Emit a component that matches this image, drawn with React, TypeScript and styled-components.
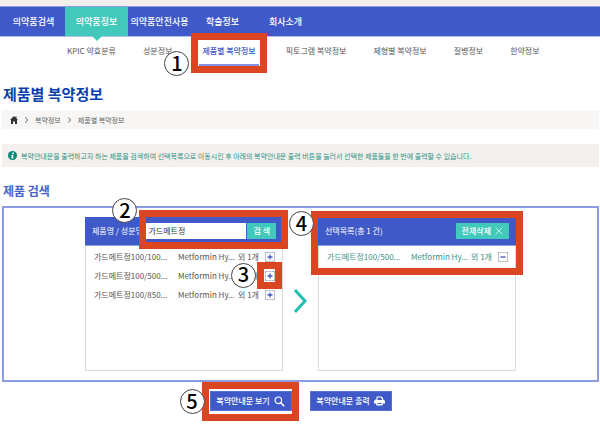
import React from "react";
import styled, { createGlobalStyle, css } from "styled-components";

const blue = "#4059c8";
const teal = "#42c9bb";
const orange = "#dc4522";

const GlobalStyle = createGlobalStyle`
  * { box-sizing: border-box; }
  body {
    margin: 0;
    background: #fff;
    color: #555;
    font-family: "Noto Sans CJK KR", "Noto Sans", sans-serif;
    font-size: 8px;
    line-height: 12px;
  }
  button, input { font: inherit; }
  a { color: inherit; text-decoration: none; }
`;

const Page = styled.div`
  min-height: 100vh;
  padding-bottom: 12px;
  border-top: 6px solid #f3efec;
`;

const MainNav = styled.nav`
  display: flex;
  height: 31px;
  background: ${blue};
  border-top: 1px solid #8e9ce0;
  border-bottom: 1px solid #b5bfec;
  font-size: 9px;
  font-weight: 500;
  white-space: nowrap;
`;

const MainLink = styled.a<{ $active?: boolean; $space?: number }>`
  position: relative;
  display: flex;
  align-items: center;
  justify-content: center;
  min-width: 63px;
  margin-left: ${(p) => p.$space ?? 0}px;
  color: #fff;
  ${(p) =>
    p.$active &&
    css`
      background: ${teal};
      &::after {
        content: "";
        position: absolute;
        top: 100%;
        left: 50%;
        margin-left: -5px;
        border: 5px solid transparent;
        border-top-color: ${teal};
        border-bottom-width: 0;
      }
    `}
`;

const SubNav = styled.nav`
  display: flex;
  gap: 27px;
  padding: 8px 0 0 67px;
  height: 46px;
  white-space: nowrap;
`;

const SubLink = styled.a<{ $active?: boolean }>`
  position: relative;
  display: flex;
  justify-content: center;
  height: 21px;
  padding: 0 ${(p) => (p.$active ? 3 : 0)}px;
  color: ${(p) => (p.$active ? blue : "#555")};
  font-weight: ${(p) => (p.$active ? 500 : 400)};
  border-bottom: 2px solid ${(p) => (p.$active ? "#8391df" : "transparent")};
`;

const Content = styled.main`
  padding: 0 1px 0 2px;
`;

const Title = styled.h1`
  margin: 0 0 5px;
  padding-left: 1px;
  font-size: 15px;
  line-height: 22px;
  font-weight: 700;
  color: #0b3fae;
`;

const Breadcrumb = styled.nav`
  display: flex;
  align-items: center;
  gap: 6px;
  height: 19px;
  padding-left: 8px;
  background: #f7f6f5;
  font-size: 7px;
  color: #666;
  svg { display: block; }
`;

const Notice = styled.p`
  display: flex;
  align-items: center;
  gap: 4px;
  height: 23px;
  margin: 15px 0 13px;
  padding-left: 6px;
  background: #f4f0ed;
  font-size: 7px;
  color: #2c9485;
  white-space: nowrap;
`;

const Heading = styled.h2`
  margin: 0 0 4px;
  padding-left: 1px;
  font-size: 12px;
  line-height: 22px;
  font-weight: 700;
  color: #4a62c8;
`;

const SearchArea = styled.section`
  display: flex;
  justify-content: center;
  align-items: center;
  padding: 9px 0;
  border: 2px solid #8d9be1;
`;

const Panel = styled.section`
  position: relative;
  width: 198px;
  height: 154px;
  border: 1px solid #dcdcdc;
  border-top: 0;
`;

const PanelHeader = styled.header`
  position: relative;
  display: flex;
  align-items: center;
  justify-content: space-between;
  height: 29px;
  margin: 0 -1px;
  padding: 0 7px;
  background: ${blue};
  border-bottom: 1px solid #8d9be1;
  color: #fff;
  white-space: nowrap;
`;

const SearchGroup = styled.form`
  position: relative;
  display: flex;
  gap: 1px;
  height: 16px;
`;

const SearchInput = styled.input`
  width: 100px;
  padding: 0 2px;
  border: 0;
  background: #fff;
  color: #333;
`;

const TealButton = styled.button`
  display: flex;
  align-items: center;
  justify-content: center;
  gap: 4px;
  height: 16px;
  padding: 0 6px;
  border: 0;
  background: ${teal};
  color: #fff;
  font-weight: 500;
`;

const List = styled.ul<{ $selected?: boolean }>`
  margin: 0;
  padding: 1px 7px 0 8px;
  list-style: none;
  color: ${(p) => (p.$selected ? "#3c9186" : "#555")};
`;

const Row = styled.li`
  display: grid;
  grid-template-columns: 84px 60px 1fr 10px;
  align-items: center;
  height: 19px;
  white-space: nowrap;
`;

const IconButton = styled.button`
  position: relative;
  display: block;
  width: 10px;
  height: 10px;
  padding: 0;
  border: 1px dashed #b9b9c4;
  background: #fff;
  color: ${blue};
  svg { display: block; }
`;

const ArrowIcon = styled.svg`
  width: 35px;
  height: 24px;
  margin-top: 14px;
`;

const Actions = styled.div`
  display: flex;
  justify-content: center;
  gap: 18px;
  margin-top: 9px;
`;

const ActionButton = styled.button`
  position: relative;
  display: flex;
  align-items: center;
  justify-content: center;
  gap: 4px;
  width: 82px;
  height: 20px;
  padding: 0;
  border: 1px solid #5a70d2;
  background: ${blue};
  color: #fff;
  font-weight: 500;
  white-space: nowrap;
`;

const Highlight = styled.span<{ $inset: string }>`
  position: absolute;
  z-index: 1;
  inset: ${(p) => p.$inset};
  border: 7px solid ${orange};
  pointer-events: none;
`;

const Step = styled.span<{ $left: number; $top: number }>`
  position: absolute;
  z-index: 2;
  left: ${(p) => p.$left}px;
  top: ${(p) => p.$top}px;
  display: flex;
  align-items: center;
  justify-content: center;
  width: 25px;
  height: 25px;
  padding-bottom: 2px;
  border: 1px solid #444;
  border-radius: 50%;
  background: #fff;
  color: #000;
  font-size: 20px;
  line-height: 20px;
  font-weight: 500;
`;

const HomeIcon = () => (
  <svg width="8" height="8" viewBox="0 0 16 16" fill="#333" aria-hidden="true">
    <path d="M8 0 0 8h2v8h4v-5h4v5h4V8h2L13 5V1h-2v2z" />
  </svg>
);

const Chevron = () => (
  <svg width="5" height="6" viewBox="0 0 5 6" fill="none" stroke="#777" aria-hidden="true">
    <path d="M1 .5 4 3 1 5.5" />
  </svg>
);

const InfoIcon = () => (
  <svg width="9" height="9" viewBox="0 0 18 18" aria-hidden="true">
    <circle cx="9" cy="9" r="9" fill="#08897b" />
    <path d="M9 3h3l-.6 3h-3zM7 7.500h4L9.800 13h1.500l-.4 2H6.500l1.200-5.500H6.500z" fill="#fff" />
  </svg>
);

const PlusMinus = ({ minus }: { minus?: boolean }) => (
  <svg width="8" height="8" viewBox="0 0 8 8" fill="none" stroke="currentColor" aria-hidden="true">
    <path d={minus ? "M1.500 4h5" : "M1.500 4h5M4 1.500v5"} strokeWidth="1.300" />
  </svg>
);

const CloseIcon = () => (
  <svg width="8" height="8" viewBox="0 0 8 8" fill="none" stroke="#fff" strokeWidth=".7" aria-hidden="true">
    <path d="m.5.5 7 7m0-7-7 7" />
  </svg>
);

const SearchIcon = () => (
  <svg width="11" height="11" viewBox="0 0 11 11" fill="none" stroke="#fff" aria-hidden="true">
    <circle cx="4.300" cy="4.300" r="3.300" strokeWidth="1.200" />
    <path d="m6.700 6.700 3.500 3.500" strokeWidth="1.500" />
  </svg>
);

const PrinterIcon = () => (
  <svg width="11" height="10" viewBox="0 0 22 20" aria-hidden="true">
    <path d="M5 1h10l3 3v3h1l3 3v5h-4l-1 4H5l-1-4H0v-5l3-3h2z" fill="#fff" />
    <path d="M7 3h7v2h2v3H7zM7 14h8v2H7z" fill={blue} />
  </svg>
);

const products = ["가드메트정100/100...", "가드메트정100/500...", "가드메트정100/850..."];

export default function App() {
  return (
    <>
      <GlobalStyle />
      <Page>
        <MainNav>
          <MainLink href="#search" $space={2}>의약품검색</MainLink>
          <MainLink href="#info" $active>의약품정보</MainLink>
          <MainLink href="#safety">의약품안전사용</MainLink>
          <MainLink href="#research">학술정보</MainLink>
          <MainLink href="#company">회사소개</MainLink>
        </MainNav>
        <SubNav>
          <SubLink href="#kpic">KPIC 약효분류</SubLink>
          <SubLink href="#ingredient">성분정보</SubLink>
          <SubLink href="#product" $active>
            제품별 복약정보
            <Highlight $inset="-12px -8px -9px -8px" />
            <Step $left={-35} $top={6}>1</Step>
          </SubLink>
          <SubLink href="#pictogram">픽토그램 복약정보</SubLink>
          <SubLink href="#form">제형별 복약정보</SubLink>
          <SubLink href="#disease">질병정보</SubLink>
          <SubLink href="#herbal">한약정보</SubLink>
        </SubNav>
        <Content>
          <Title>제품별 복약정보</Title>
          <Breadcrumb>
            <HomeIcon />
            <Chevron />
            <a href="#guide">복약정보</a>
            <Chevron />
            <a href="#product">제품별 복약정보</a>
          </Breadcrumb>
          <Notice>
            <InfoIcon />
            복약안내문을 출력하고자 하는 제품을 검색하여 선택목록으로 이동시킨 후 아래의 복약안내문 출력 버튼을 눌러서 선택한 제품들을 한 번에 출력할 수 있습니다.
          </Notice>
          <Heading>제품 검색</Heading>
          <SearchArea>
            <Panel>
              <PanelHeader>
                <label htmlFor="keyword">제품명 / 성분명</label>
                <SearchGroup onSubmit={(e) => e.preventDefault()}>
                  <SearchInput id="keyword" defaultValue="가드메트정" />
                  <TealButton type="submit">검 색</TealButton>
                  <Highlight $inset="-13px -12px -10px -7px" />
                  <Step $left={-34} $top={-25}>2</Step>
                </SearchGroup>
              </PanelHeader>
              <List>
                {products.map((name, i) => (
                  <Row key={name}>
                    <span>{name}</span>
                    <span>Metformin Hy...</span>
                    <span>외 1개</span>
                    <IconButton type="button" aria-label={`${name} 추가`}>
                      <PlusMinus />
                      {i === 1 && (
                        <>
                          <Highlight $inset="-10px -8px -9px -9px" />
                          <Step $left={-35} $top={-9}>3</Step>
                        </>
                      )}
                    </IconButton>
                  </Row>
                ))}
              </List>
            </Panel>
            <ArrowIcon viewBox="0 0 35 24" fill="none" stroke="#22bfb0" strokeWidth="3" aria-hidden="true">
              <path d="m12 1 10 11-10 11" />
            </ArrowIcon>
            <Panel>
              <PanelHeader>
                <span>선택목록(총 1 건)</span>
                <TealButton type="button">전체삭제 <CloseIcon /></TealButton>
                <Highlight $inset="-6px -7px -30px -7px" />
                <Step $left={-29} $top={-6}>4</Step>
              </PanelHeader>
              <List $selected>
                <Row>
                  <span>가드메트정100/500...</span>
                  <span>Metformin Hy...</span>
                  <span>외 1개</span>
                  <IconButton type="button" aria-label="가드메트정100/500 삭제"><PlusMinus minus /></IconButton>
                </Row>
              </List>
            </Panel>
          </SearchArea>
          <Actions>
            <ActionButton type="button">
              복약안내문 보기 <SearchIcon />
              <Highlight $inset="-10px -8px -11px -9px" />
              <Step $left={-31} $top={-3}>5</Step>
            </ActionButton>
            <ActionButton type="button">복약안내문 출력 <PrinterIcon /></ActionButton>
          </Actions>
        </Content>
      </Page>
    </>
  );
}
